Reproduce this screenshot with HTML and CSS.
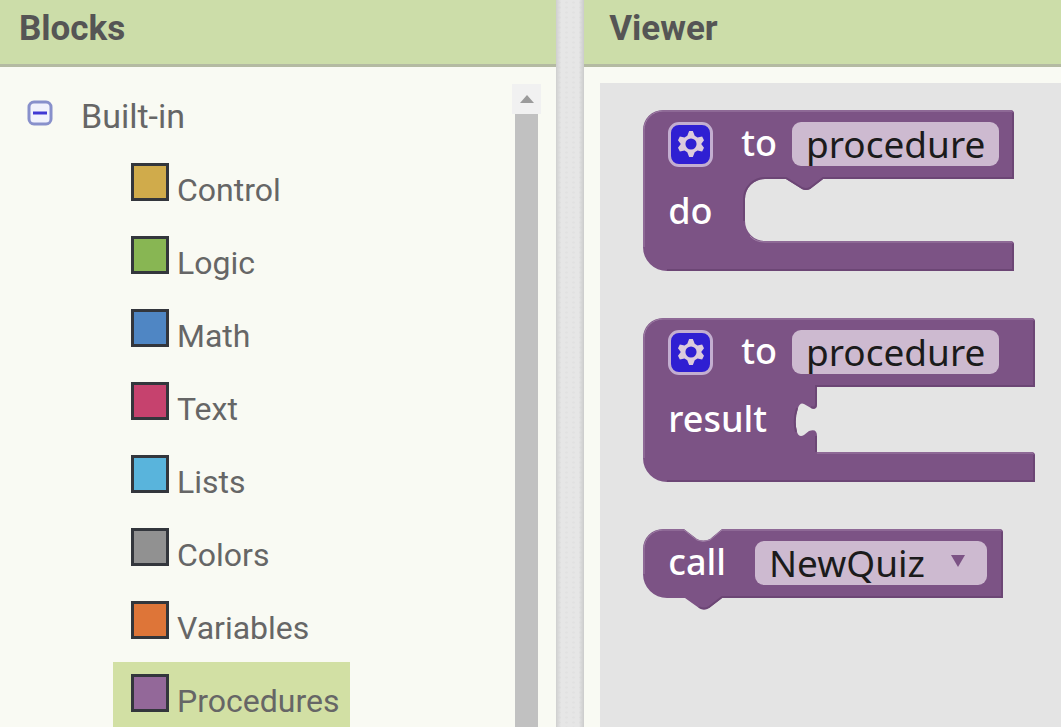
FILE: index.html
```html
<!DOCTYPE html>
<html lang="en">
<head>
    <meta charset="UTF-8">
    <meta name="viewport" content="width=device-width, initial-scale=1.0">
    <title>Blocks Editor</title>
    <link rel="stylesheet" href="styles.css">
</head>
<body>
    <div class="editor">
        <section class="panel">
            <h2 class="panel-title">Blocks</h2>
            <div class="panel-body">
                <nav class="tree">
                    <div class="tree-root">
                        <button class="toggle" aria-label="Collapse Built-in">
                            <svg width="26" height="26" viewBox="0 0 26 26">
                                <rect x="2" y="2" width="22" height="22" rx="5" fill="#f1f2fc" stroke="#8890cb" stroke-width="3"/>
                                <path d="M6 13H20" stroke="#4038d4" stroke-width="3"/>
                            </svg>
                        </button>
                        <span>Built-in</span>
                    </div>
                    <ul class="drawers">
                        <li><a href="#" class="drawer"><span class="swatch control"></span>Control</a></li>
                        <li><a href="#" class="drawer"><span class="swatch logic"></span>Logic</a></li>
                        <li><a href="#" class="drawer"><span class="swatch math"></span>Math</a></li>
                        <li><a href="#" class="drawer"><span class="swatch text"></span>Text</a></li>
                        <li><a href="#" class="drawer"><span class="swatch lists"></span>Lists</a></li>
                        <li><a href="#" class="drawer"><span class="swatch colors"></span>Colors</a></li>
                        <li><a href="#" class="drawer"><span class="swatch variables"></span>Variables</a></li>
                        <li><a href="#" class="drawer selected"><span class="swatch procedures"></span>Procedures</a></li>
                    </ul>
                </nav>
                <div class="scrollbar">
                    <button class="scroll-up" aria-label="Scroll up">
                        <svg width="14" height="8" viewBox="0 0 14 8"><path d="M7 0L14 8H0Z" fill="#9b9b9b"/></svg>
                    </button>
                    <div class="scroll-thumb"></div>
                </div>
            </div>
        </section>

        <div class="splitter"></div>

        <section class="panel">
            <h2 class="panel-title viewer-title">Viewer</h2>
            <div class="workspace">
                <!-- procedure without result -->
                <div class="block">
                    <svg class="shape" width="371" height="161" viewBox="0 0 371 161">
                        <path d="M20 0H369L371 2V69H180L167 79Q163 81 159 79L143 69H122A20 20 0 0 0 102 89V111A20 20 0 0 0 122 131H369L371 133V161H24A24 24 0 0 1 0 137V20A20 20 0 0 1 20 0Z"/>
                        <path class="light" d="M1 137V20A19 19 0 0 1 20 1H369M107 126Q112 132 122 132H369"/>
                        <path class="dark" d="M370 3V68H180L167 78Q163 80 159 78L143 68H122A21 21 0 0 0 101 89V111M370 134V160H24"/>
                    </svg>
                    <div class="row">
                        <button class="gear" aria-label="Block options">
                            <svg width="26" height="28" viewBox="-14 -15 28 30">
                                <path fill-rule="evenodd" d="M-2 -14H2L4 -9L7 -7L12 -8L14 -4L11 0L14 4L12 8L7 7L4 9L2 14H-2L-4 9L-7 7L-12 8L-14 4L-11 0L-14 -4L-12 -8L-7 -7L-4 -9ZM0 -6A6 6 0 1 0 0 6A6 6 0 1 0 0 -6Z"/>
                            </svg>
                        </button>
                        <label for="proc1">to</label>
                        <input type="text" class="field" id="proc1" value="procedure">
                    </div>
                    <div class="row statement">do</div>
                </div>

                <!-- procedure with result -->
                <div class="block block-result">
                    <svg class="shape" width="392" height="164" viewBox="0 0 392 164">
                        <path d="M20 0H390L392 2V69H174V86Q174 93 168 90L161 86Q157 84 155 90Q151 102 154 114Q156 120 161 117L166 113Q174 110 174 118V134H390L392 136V164H24A24 24 0 0 1 0 140V20A20 20 0 0 1 20 0Z"/>
                        <path class="light" d="M1 140V20A19 19 0 0 1 20 1H390M174 135H390"/>
                        <path class="dark" d="M391 3V68H173V86Q173 91 168 89M154 90Q150 102 153 114M173 118V134M391 137V163H24"/>
                    </svg>
                    <div class="row">
                        <button class="gear" aria-label="Block options">
                            <svg width="26" height="28" viewBox="-14 -15 28 30">
                                <path fill-rule="evenodd" d="M-2 -14H2L4 -9L7 -7L12 -8L14 -4L11 0L14 4L12 8L7 7L4 9L2 14H-2L-4 9L-7 7L-12 8L-14 4L-11 0L-14 -4L-12 -8L-7 -7L-4 -9ZM0 -6A6 6 0 1 0 0 6A6 6 0 1 0 0 -6Z"/>
                            </svg>
                        </button>
                        <label for="proc2">to</label>
                        <input type="text" class="field" id="proc2" value="procedure">
                    </div>
                    <div class="row statement">result</div>
                </div>

                <!-- procedure call -->
                <div class="block block-call">
                    <svg class="shape" width="360" height="81" viewBox="0 0 360 81">
                        <path d="M20 0H41L54 10Q60 13 67 10L79 0H358L360 2V69H79L66 79Q61 82 56 79L42 69H24A24 24 0 0 1 0 45V20A20 20 0 0 1 20 0Z"/>
                        <path class="light" d="M1 45V20A19 19 0 0 1 20 1H41L54 11Q60 14 67 11L79 1H358"/>
                        <path class="dark" d="M359 3V68H79L66 78Q61 81 56 78"/>
                    </svg>
                    <div class="row">
                        <label for="call">call</label>
                        <span class="dropdown">
                            <select class="field" id="call">
                                <option>NewQuiz</option>
                            </select>
                            <svg class="arrow" width="14" height="12" viewBox="0 0 14 12"><path d="M0 0H14L7 12Z" fill="#7c5385"/></svg>
                        </span>
                    </div>
                </div>
            </div>
        </section>
    </div>
</body>
</html>
```

FILE: styles.css
```css
* {
    box-sizing: border-box;
}
body {
    margin: 0;
    font-family: Roboto, Arial, sans-serif;
    font-size: 32px;
    color: #666;
    background: #f9faf3;
}
button {
    padding: 0;
    border: none;
    background: none;
    cursor: pointer;
}
.editor {
    display: grid;
    grid-template-columns: 7fr 28px 6fr;
    height: 100vh;
    overflow: hidden;
}
.panel {
    display: flex;
    flex-direction: column;
    min-width: 0;
    min-height: 0;
    background: #f9faf3;
}
.panel-title {
    flex: none;
    margin: 0;
    padding: 9px 19px 15px;
    font-size: 35px;
    line-height: 40px;
    font-weight: 700;
    color: #555;
    background: #ccdda9;
    border-bottom: 3px solid #b4baa2;
}
.viewer-title {
    padding-left: 25px;
}
.panel-body {
    display: flex;
    flex: 1;
    min-height: 0;
    padding: 17px 15px 0 0;
}

/* block drawers */
.tree {
    flex: 1;
    overflow: hidden;
}
.tree-root {
    display: flex;
    align-items: center;
    gap: 28px;
    height: 67px;
    padding-left: 27px;
    padding-bottom: 4px;
    font-size: 34px;
}
.toggle {
    display: flex;
    margin-bottom: 6px;
}
.drawers {
    list-style: none;
    margin: 0;
    padding: 0 0 0 113px;
}
.drawer {
    display: flex;
    align-items: baseline;
    gap: 8px;
    width: fit-content;
    height: 73px;
    padding: 12px 11px 0 18px;
    color: inherit;
    text-decoration: none;
}
.selected {
    background: #d2e0a4;
}
.swatch {
    width: 38px;
    height: 38px;
    border: 3px solid #33363c;
}
.control { background: #d0ab4b; }
.logic { background: #88b653; }
.math { background: #4f86c4; }
.text { background: #c6426e; }
.lists { background: #59b4dc; }
.colors { background: #919191; }
.variables { background: #de7538; }
.procedures { background: #936899; }

.scrollbar {
    display: flex;
    flex-direction: column;
    align-items: center;
    width: 29px;
}
.scroll-up {
    display: flex;
    align-items: center;
    justify-content: center;
    width: 100%;
    height: 30px;
    background: #f1f1f1;
}
.scroll-thumb {
    flex: 1;
    width: 23px;
    background: #c1c1c1;
}
.splitter {
    background:
        linear-gradient(to right, #cfcfcf, transparent 5px, transparent 23px, #cbcbcb),
        radial-gradient(#e1e1e1 1px, transparent 2px) 0 0 / 7px 5px,
        #e6e6e6;
}

/* viewer */
.workspace {
    display: flex;
    flex: 1;
    flex-direction: column;
    align-items: flex-start;
    gap: 47px;
    min-height: 0;
    margin: 16px 0 0 16px;
    padding: 27px 0 0 43px;
    overflow: hidden;
    background: #e4e4e4;
}
.block {
    position: relative;
    flex: none;
    padding-left: 25px;
    padding-bottom: 25px;
    font-family: "Noto Sans", sans-serif;
    font-size: 36px;
    font-weight: 500;
    color: #fff;
}
.block-result {
    padding-bottom: 28px;
}
.block-call {
    padding-bottom: 13px;
}
.shape {
    position: absolute;
    top: 0;
    left: 0;
    fill: #7c5385;
}
.light {
    fill: none;
    stroke: #a080a7;
    stroke-width: 1;
}
.dark {
    fill: none;
    stroke: #6c4675;
    stroke-width: 2;
}
.row {
    position: relative;
    display: flex;
    align-items: center;
    height: 68px;
    line-height: 44px;
}
.statement {
    padding-bottom: 3px;
}
.gear {
    display: flex;
    align-items: center;
    justify-content: center;
    width: 45px;
    height: 45px;
    margin-right: 28px;
    border: 3px solid #c3aed0;
    border-radius: 11px;
    background: #2f1fd2;
    fill: #dccbdc;
}
.row label {
    margin-right: 15px;
    padding-bottom: 2px;
}
.field {
    width: 207px;
    height: 44px;
    padding: 0 14px;
    border: none;
    border-radius: 9px;
    font-family: inherit;
    font-size: 37px;
    font-weight: 400;
    line-height: 44px;
    color: #1b1b1b;
    background: #cdbad0;
    appearance: none;
}
.dropdown {
    position: relative;
    display: flex;
    margin-left: 14px;
}
.dropdown .field {
    width: 232px;
}
.arrow {
    position: absolute;
    top: 14px;
    right: 22px;
    pointer-events: none;
}
```
